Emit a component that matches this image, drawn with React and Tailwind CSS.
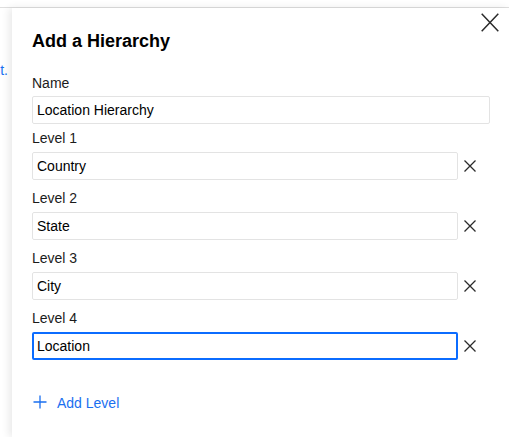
import { useState } from 'react';

function CloseIcon({ size = 12, stroke = 1.3 }) {
  return (
    <svg width={size} height={size} viewBox="0 0 12 12" fill="none">
      <path d="M0.5 0.5L11.5 11.5M11.5 0.5L0.5 11.5" stroke="#2b2b2b" strokeWidth={stroke} />
    </svg>
  );
}

export default function App() {
  const [name, setName] = useState('Location Hierarchy');
  const [levels, setLevels] = useState(['Country', 'State', 'City', 'Location']);

  const inputClass = "w-full h-[28px] px-[4px] border border-[#e3e3e3] rounded-[2px] bg-white text-[14px] leading-[20px] text-black outline-none";

  function updateLevel(i, value) {
    setLevels(prev => prev.map((l, idx) => (idx === i ? value : l)));
  }

  return (
    <div className="w-[509px] h-[437px] bg-white overflow-hidden" style={{ fontFamily: '"Liberation Sans", Arial, sans-serif' }}>
      <div className="h-[7px] bg-white" />
      <div className="flex h-[430px] border-t border-[#dedede]">
        {/* page behind the panel */}
        <div className="w-[12px] overflow-hidden flex justify-end pr-[4px]">
          <span className="mt-[52px] text-[14px] leading-[20px] text-[#1a6ff0] whitespace-nowrap">document.</span>
        </div>

        {/* Panel */}
        <div className="relative flex-1 bg-white shadow-[-3px_0_8px_rgba(0,0,0,0.09)] pl-[20px] pr-[19px] pt-[22px]">
          <button className="absolute top-[5px] right-[10px]">
            <svg width="18" height="19" viewBox="0 0 18 19" fill="none">
              <path d="M0.7 0.7L17.3 18.3M17.3 0.7L0.7 18.3" stroke="#2b2b2b" strokeWidth="1.5" />
            </svg>
          </button>

          <h2 className="text-[18px] leading-[22px] font-bold text-black">Add a Hierarchy</h2>

          <label className="block mt-[21px] mb-[3px] text-[14px] leading-[20px] text-[#1b1b1b]">Name</label>
          <input value={name} onChange={(e) => setName(e.target.value)} className={inputClass} />

          {levels.map((lvl, i) => (
            <div key={i} className={i === 0 ? 'mt-[4px]' : 'mt-[8px]'}>
              <label className="block mb-[4px] text-[14px] leading-[20px] text-[#1b1b1b]">Level {i + 1}</label>
              <div className="flex items-center">
                <input value={lvl} onChange={(e) => updateLevel(i, e.target.value)}
                  className={i === levels.length - 1
                    ? "flex-1 h-[28px] px-[3px] border-2 border-[#0b6cff] rounded-[2px] bg-white text-[14px] leading-[20px] text-black outline-none"
                    : "flex-1 h-[28px] px-[4px] border border-[#e3e3e3] rounded-[2px] bg-white text-[14px] leading-[20px] text-black outline-none"} />
                <div className="w-[32px] flex pl-[6px]">
                  <CloseIcon />
                </div>
              </div>
            </div>
          ))}

          <button className="mt-[33px] flex items-center gap-[9px] text-[14px] leading-[20px] text-[#1a6ff0]">
            <svg width="16" height="16" viewBox="0 0 16 16" fill="none" className="ml-[0px] -mt-[2px]">
              <path d="M8 1.5V14.5M1.5 8H14.5" stroke="#1a6ff0" strokeWidth="1.3" />
            </svg>
            Add Level
          </button>
        </div>
      </div>
    </div>
  );
}
